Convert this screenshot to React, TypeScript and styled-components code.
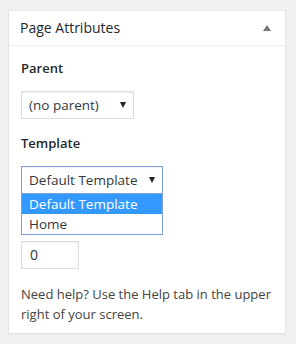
import React from 'react';
import styled, { createGlobalStyle } from 'styled-components';

const GlobalStyle = createGlobalStyle`
  html, body {
    margin: 0;
    padding: 0;
    background: #f1f1f1;
  }
  body {
    font-family: 'Open Sans', 'Noto Sans', sans-serif;
    font-size: 13px;
    color: #444;
  }
`;

const Page = styled.div`
  padding: 10px 10px 10px 8px;
  width: 278px;
`;

const Panel = styled.div`
  background: #fff;
  border: 1px solid #e5e5e5;
  box-shadow: 0 1px 1px rgba(0, 0, 0, 0.04);
  width: 276px;
`;

const Header = styled.div`
  display: flex;
  align-items: center;
  justify-content: space-between;
  height: 34px;
  padding: 0 12px 0 11px;
  border-bottom: 1px solid #eee;
`;

const Title = styled.h2`
  margin: 0;
  font-size: 14px;
  font-weight: 400;
  color: #23282d;
  line-height: 20px;
`;

const Toggle = styled.span`
  width: 0;
  height: 0;
  border-left: 4px solid transparent;
  border-right: 4px solid transparent;
  border-bottom: 6px solid #72777c;
  margin-right: 2px;
`;

const Body = styled.div`
  padding: 12px 12px 9px 12px;
`;

const Label = styled.p<{ $top?: number; $covered?: boolean }>`
  margin: ${(p) => p.$top ?? 0}px 0 13px;
  font-weight: 600;
  line-height: 20px;
  color: #23282d;
  visibility: ${(p) => (p.$covered ? 'hidden' : 'visible')};
`;

const SelectWrap = styled.div`
  position: relative;
  width: fit-content;
`;

const SelectBox = styled.div<{ $w: number; $focus?: boolean }>`
  display: flex;
  align-items: center;
  justify-content: space-between;
  box-sizing: border-box;
  width: ${(p) => p.$w}px;
  height: 28px;
  padding: 0 7px 0 7px;
  border: 1px solid ${(p) => (p.$focus ? '#7e9fd6' : '#ddd')};
  background: #fff;
  color: #32373c;
  font-size: 13.5px;
  box-shadow: inset 0 1px 2px rgba(0, 0, 0, 0.07);
`;

const Arrow = styled.span`
  width: 0;
  height: 0;
  border-left: 3.5px solid transparent;
  border-right: 3.5px solid transparent;
  border-top: 6px solid #222;
`;

const Options = styled.ul`
  position: absolute;
  top: 28px;
  left: 0;
  right: 0;
  margin: 0;
  padding: 0;
  list-style: none;
  border: 1px solid #7e9fd6;
  border-top: none;
  background: #fff;
  z-index: 2;
`;

const Option = styled.li<{ $active?: boolean }>`
  height: 20px;
  line-height: 20px;
  padding: 0 7px;
  font-size: 13.5px;
  color: ${(p) => (p.$active ? '#fff' : '#32373c')};
  background: ${(p) => (p.$active ? '#3399ff' : '#fff')};
`;

const NumberInput = styled.div`
  box-sizing: border-box;
  width: 58px;
  height: 28px;
  padding: 0 8px;
  line-height: 26px;
  border: 1px solid #ddd;
  box-shadow: inset 0 1px 2px rgba(0, 0, 0, 0.07);
  color: #32373c;
  font-size: 14px;
`;

const Help = styled.p`
  margin: 15px 0 0;
  line-height: 20px;
  color: #444;
`;

export default function App() {
  return (
    <Page>
      <GlobalStyle />
      <Panel>
        <Header>
          <Title>Page Attributes</Title>
          <Toggle />
        </Header>
        <Body>
          <Label>Parent</Label>
          <SelectBox $w={113}>
            <span>(no parent)</span>
            <Arrow />
          </SelectBox>
          <Label $top={14}>Template</Label>
          <SelectWrap>
            <SelectBox $w={142} $focus>
              <span>Default Template</span>
              <Arrow />
            </SelectBox>
            <Options>
              <Option $active>Default Template</Option>
              <Option>Home</Option>
            </Options>
          </SelectWrap>
          <Label $top={14} $covered>
            Order
          </Label>
          <NumberInput>0</NumberInput>
          <Help>Need help? Use the Help tab in the upper right of your screen.</Help>
        </Body>
      </Panel>
    </Page>
  );
}
